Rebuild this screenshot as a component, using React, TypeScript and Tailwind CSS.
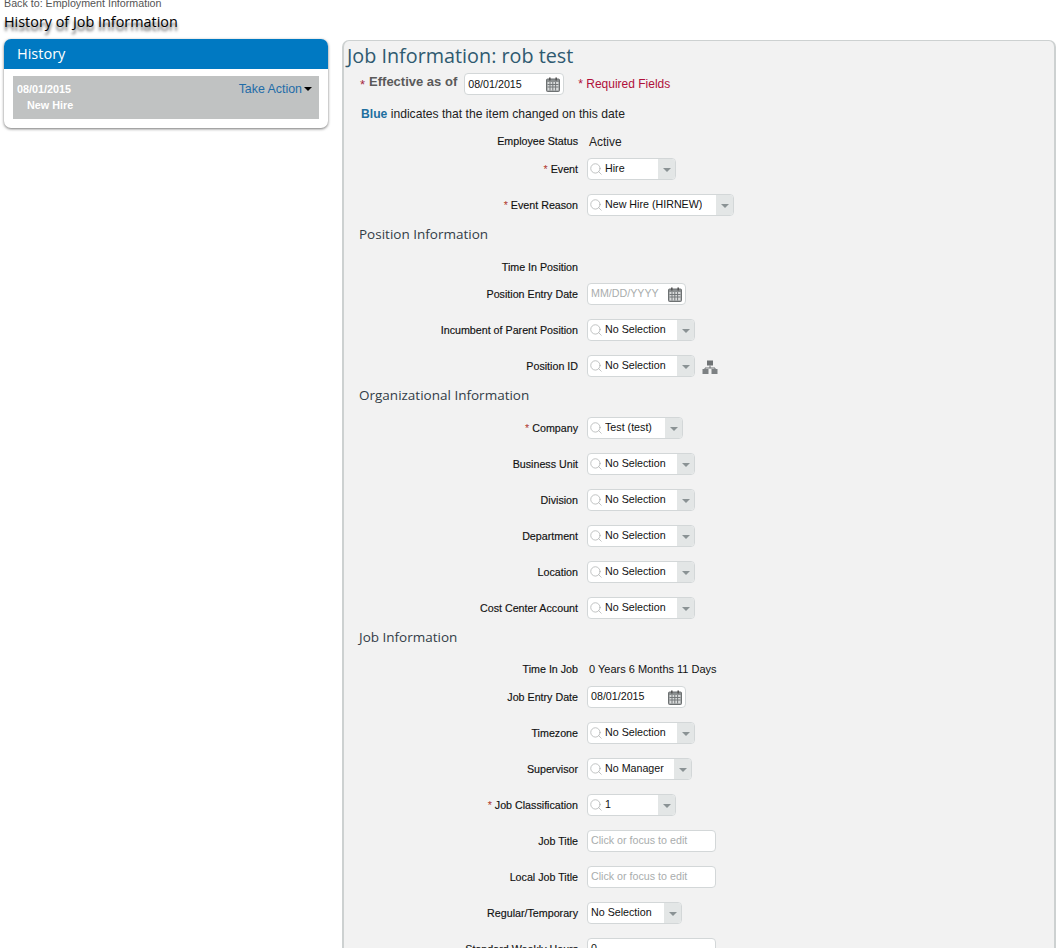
import { Search } from 'lucide-react';

const sans = "font-['Liberation_Sans',Arial,sans-serif]";
const open = "font-['Open_Sans',sans-serif]";

function Caret() {
  return <span className="block h-0 w-0 border-x-[4px] border-t-[4px] border-x-transparent border-t-[#8a9294]" />;
}

function CalendarIcon() {
  return (
    <svg width="14" height="15" viewBox="0 0 14 15" className="shrink-0">
      <rect x="0.5" y="2" width="13" height="12.5" rx="1" fill="#8b8f90" stroke="#6d7172" />
      <rect x="3" y="0.5" width="1.6" height="3" fill="#555" />
      <rect x="9.4" y="0.5" width="1.6" height="3" fill="#555" />
      <rect x="1.5" y="5" width="11" height="8.5" fill="#d9dbdb" />
      <path d="M1.5 7.5h11M1.5 10h11M4 5v8.5M6.8 5v8.5M9.6 5v8.5" stroke="#74787a" strokeWidth="1" />
    </svg>
  );
}

function OrgIcon() {
  return (
    <svg width="16" height="14" viewBox="0 0 16 14" className="ml-[7px]">
      <rect x="5" y="0.5" width="6" height="5" fill="#6f7375" />
      <path d="M8 5.5v2.5M3 10V8h10v2" stroke="#6f7375" fill="none" />
      <rect x="0.5" y="9" width="6" height="5" fill="#7d8183" />
      <rect x="9.5" y="9" width="6" height="5" fill="#7d8183" />
    </svg>
  );
}

function Label({ text, req }: { text: string; req?: boolean }) {
  return (
    <div className="w-[234px] shrink-0 text-right text-[10.7px] leading-[13px] text-[#111] [-webkit-text-stroke:0.15px_#111]">
      {req && <span className="mr-[3px] text-[#b0392f] [-webkit-text-stroke:0]">*</span>}
      {text}
    </div>
  );
}

function Select({ value, width, noSearch }: { value: string; width: string; noSearch?: boolean }) {
  return (
    <div className={`flex h-[22px] self-start ${width} overflow-hidden rounded-[4px] border border-[#d3d7d8] bg-white`}>
      <div className="flex min-w-0 flex-1 items-center pb-[1px] text-[10.7px] text-[#111]">
        {noSearch ? (
          <span className="pl-[3px]">{value}</span>
        ) : (
          <>
            <Search size={14} strokeWidth={1.2} className="ml-[1px] mr-[2px] mt-[1px] shrink-0 text-[#a7abab]" />
            <span className="truncate">{value}</span>
          </>
        )}
      </div>
      <div className="flex w-[17px] shrink-0 items-center justify-center bg-[#e3e6e6] pt-[2px]">
        <Caret />
      </div>
    </div>
  );
}

function DateBox({ value, placeholder, width = 'w-[99px]', raised = true }: { value?: string; placeholder?: string; width?: string; raised?: boolean }) {
  return (
    <div className={`flex h-[22px] self-start ${width} items-center justify-between rounded-[4px] border border-[#d3d7d8] bg-white pl-[3px] pr-[3px] text-[10.7px]`}>
      <span className={`${raised ? 'pb-[2px]' : ''} ${value ? 'text-[#111]' : 'text-[#a9adad]'}`}>{value ?? placeholder}</span>
      <CalendarIcon />
    </div>
  );
}

function TextBox({ placeholder, value }: { placeholder?: string; value?: string }) {
  return (
    <div className={`flex h-[22px] w-[129px] self-start items-center rounded-[4px] border border-[#d3d7d8] bg-white pb-[1px] pl-[3px] text-[10.7px] ${value ? 'text-[#111]' : 'text-[#a9adad]'}`}>
      {value ?? placeholder}
    </div>
  );
}

function Row({ label, req, mt = 'mt-[13px]', children }: { label: string; req?: boolean; mt?: string; children?: React.ReactNode }) {
  return (
    <div className={`flex h-[23px] items-center gap-[9px] ${mt}`}>
      <Label text={label} req={req} />
      {children}
    </div>
  );
}

function SectionHeading({ text, mt }: { text: string; mt: string }) {
  return (
    <h3 className={`${open} ${mt} ml-[15px] h-[23px] text-[13.5px] font-normal leading-[23px] text-[#333d47]`}>{text}</h3>
  );
}

export default function App() {
  return (
    <div className={`${sans} h-[948px] overflow-hidden bg-white`}>
      <div className="flex h-[39px] flex-col pl-[4px]">
        <p className="-mt-[3px] text-[10.7px] leading-[13px] text-[#555]">Back to: Employment Information</p>
        <h1 className={`${open} mt-[1px] text-[14.4px] leading-[22px] text-black [text-shadow:0_4px_3px_rgba(0,0,0,0.7)]`}>
          History of Job Information
        </h1>
      </div>

      <div className="flex items-start pl-[4px]">
        <aside className="h-[89px] w-[324px] shrink-0 overflow-hidden rounded-[7px] bg-white shadow-[0_1px_3px_rgba(0,0,0,0.55)]">
          <div className={`${open} flex h-[30px] items-center bg-[#0079c2] pl-[13px] text-[14.5px] text-white`}>History</div>
          <div className="mx-[9px] mt-[7px] flex h-[43px] justify-between bg-[#c0c2c2] pl-[4px] pr-[7px]">
            <div className="pt-[5px] text-[10.8px] font-bold leading-[16px] text-white">
              <div>08/01/2015</div>
              <div className="pl-[10px]">New Hire</div>
            </div>
            <div className="flex items-start gap-[2px] pt-[6px] text-[12.4px] leading-[14px] text-[#1f6ca8]">
              Take Action
              <span className="mt-[5px] block h-0 w-0 border-x-[4px] border-t-[4px] border-x-transparent border-t-black" />
            </div>
          </div>
        </aside>

        <main className="ml-[14px] mt-[1px] h-[1000px] w-[714px] shrink-0 rounded-[7px] border-x-2 border-t border-[#cdd1d1] bg-[#f2f2f2]">
          <h2 className={`${open} ml-[3px] mt-[1px] text-[19.8px] leading-[27px] text-[#2f5a70]`}>Job Information: rob test</h2>

          <div className="mt-[4px] flex h-[23px] items-center pl-[16px]">
            <span className="mr-[4px] text-[13px] text-[#a5273f]">*</span>
            <span className="-mt-[7px] text-[13px] font-bold leading-[15px] text-[#5a5a5a]">Effective as of</span>
            <div className="ml-[7px] flex h-[23px]">
              <DateBox value="08/01/2015" width="w-[100px]" raised={false} />
            </div>
            <span className="-mt-[2px] ml-[14px] text-[12px] text-[#b0103a]">* Required Fields</span>
          </div>

          <p className="ml-[17px] mt-[11px] h-[15px] text-[12.15px] leading-[15px] text-[#222]">
            <span className="font-bold text-[#1f6f9f]">Blue</span> indicates that the item changed on this date
          </p>

          <Row label="Employee Status" mt="mt-[8px]">
            <span className="pl-[2px] text-[12px] text-[#222]">Active</span>
          </Row>
          <Row label="Event" req mt="mt-[5px]"><Select value="Hire" width="w-[89px]" /></Row>
          <Row label="Event Reason" req><Select value="New Hire (HIRNEW)" width="w-[147px]" /></Row>

          <SectionHeading text="Position Information" mt="mt-[6px]" />
          <Row label="Time In Position" mt="mt-[10px]" />
          <Row label="Position Entry Date" mt="mt-[4px]"><DateBox placeholder="MM/DD/YYYY" /></Row>
          <Row label="Incumbent of Parent Position"><Select value="No Selection" width="w-[108px]" /></Row>
          <Row label="Position ID">
            <div className="flex items-start self-start">
              <Select value="No Selection" width="w-[108px]" />
              <div className="mt-[5px]"><OrgIcon /></div>
            </div>
          </Row>

          <SectionHeading text="Organizational Information" mt="mt-[6px]" />
          <Row label="Company" req mt="mt-[10px]"><Select value="Test (test)" width="w-[96px]" /></Row>
          <Row label="Business Unit"><Select value="No Selection" width="w-[108px]" /></Row>
          <Row label="Division"><Select value="No Selection" width="w-[108px]" /></Row>
          <Row label="Department"><Select value="No Selection" width="w-[108px]" /></Row>
          <Row label="Location"><Select value="No Selection" width="w-[108px]" /></Row>
          <Row label="Cost Center Account"><Select value="No Selection" width="w-[108px]" /></Row>

          <SectionHeading text="Job Information" mt="mt-[6px]" />
          <Row label="Time In Job" mt="mt-[9px]">
            <span className="pl-[2px] text-[11px] text-[#111]">0 Years 6 Months 11 Days</span>
          </Row>
          <Row label="Job Entry Date" mt="mt-[5px]"><DateBox value="08/01/2015" /></Row>
          <Row label="Timezone"><Select value="No Selection" width="w-[108px]" /></Row>
          <Row label="Supervisor"><Select value="No Manager" width="w-[105px]" /></Row>
          <Row label="Job Classification" req><Select value="1" width="w-[89px]" /></Row>
          <Row label="Job Title"><TextBox placeholder="Click or focus to edit" /></Row>
          <Row label="Local Job Title"><TextBox placeholder="Click or focus to edit" /></Row>
          <Row label="Regular/Temporary"><Select value="No Selection" width="w-[95px]" noSearch /></Row>
          <Row label="Standard Weekly Hours"><TextBox value="0" /></Row>
        </main>
      </div>
    </div>
  );
}
